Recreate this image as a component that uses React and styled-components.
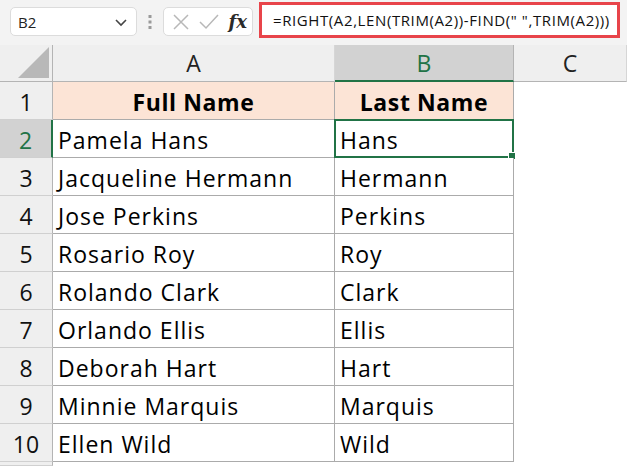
import React from "react";
import styled, { createGlobalStyle } from "styled-components";

const GlobalStyle = createGlobalStyle`
  html, body {
    margin: 0;
    padding: 0;
    background: #ffffff;
  }

  body {
    font-family: "Open Sans", "Noto Sans", sans-serif;
  }
`;

const Page = styled.div`
  width: 627px;
  height: 466px;
  overflow: hidden;
  background: #ffffff;
`;

const Toolbar = styled.div`
  height: 45px;
  box-sizing: border-box;
  padding: 2px 7px 0 10px;

  display: flex;
  align-items: flex-start;

  background: #f3f3f3;
`;

const NameBox = styled.div`
  width: 127px;
  height: 29px;
  margin-top: 5px;
  box-sizing: border-box;
  padding: 0 8px 0 7px;

  display: flex;
  align-items: center;
  justify-content: space-between;

  background: #ffffff;
  border: 1px solid #dcdcdc;
  border-radius: 5px;

  font-size: 15px;
  color: #222222;
`;

const Grip = styled.div`
  width: 26px;
  height: 29px;
  margin-top: 5px;

  display: flex;
  align-items: center;
  justify-content: center;
`;

const FxBox = styled.div`
  width: 90px;
  height: 29px;
  margin-top: 5px;
  box-sizing: border-box;
  padding: 0 5px 0 8px;

  display: flex;
  align-items: center;
  justify-content: space-between;

  background: #ffffff;
  border: 1px solid #dcdcdc;
  border-radius: 5px;
`;

const FxLabel = styled.span`
  font-family: "DejaVu Serif", "Liberation Serif", serif;
  font-style: italic;
  font-weight: 700;
  font-size: 18px;
  color: #2a2a2a;
`;

const FormulaBox = styled.div`
  width: 361px;
  height: 36px;
  margin-left: 6px;
  box-sizing: border-box;
  padding: 0 0 0 11px;

  display: flex;
  align-items: center;

  background: #ffffff;
  border: 3px solid #e8444a;

  font-size: 15px;
  letter-spacing: 0.6px;
  color: #111111;
  white-space: nowrap;
`;

const Grid = styled.div`
  display: grid;
  grid-template-columns: 53px 282px 179px 1fr;
  grid-template-rows: 37px repeat(10, 38px) 1fr;
  height: 421px;
`;

const Corner = styled.div`
  position: relative;
  background: #efefef;
  border-right: 1px solid #b4b4b4;
  border-bottom: 1px solid #b4b4b4;
`;

const CornerTriangle = styled.div`
  position: absolute;
  right: 3px;
  bottom: 3px;
  width: 0;
  height: 0;
  border-left: 31px solid transparent;
  border-bottom: 31px solid #b8b8b8;
`;

const ColHeader = styled.div`
  display: flex;
  align-items: center;
  justify-content: center;

  background: ${(p) => (p.$active ? "#d2d2d2" : "#efefef")};
  border-right: 1px solid ${(p) => (p.$active ? "#b4b4b4" : "#d6d6d6")};
  border-bottom: ${(p) => (p.$active ? "2px solid #217346" : "1px solid #b4b4b4")};
  box-sizing: border-box;

  font-size: 23px;
  color: ${(p) => (p.$active ? "#217346" : "#222222")};
`;

const RowHeader = styled.div`
  display: flex;
  align-items: center;
  justify-content: center;
  padding-top: 2px;

  background: ${(p) => (p.$active ? "#d2d2d2" : "#efefef")};
  border-right: ${(p) => (p.$active ? "2px solid #217346" : "1px solid #b4b4b4")};
  border-bottom: 1px solid #d0d0d0;
  box-sizing: border-box;

  font-size: 23px;
  color: ${(p) => (p.$active ? "#217346" : "#111111")};
`;

const Cell = styled.div`
  position: relative;
  display: flex;
  align-items: center;
  justify-content: ${(p) => (p.$head ? "center" : "flex-start")};
  padding-left: ${(p) => (p.$head ? "0" : "5px")};
  padding-top: 2px;
  box-sizing: border-box;

  background: ${(p) => (p.$head ? "#fce4d6" : "#ffffff")};
  border-right: 1px solid #ababab;
  border-bottom: 1px solid #ababab;

  font-size: 23px;
  letter-spacing: ${(p) => (p.$head ? "0.6px" : "1px")};
  font-weight: ${(p) => (p.$head ? 700 : 400)};
  color: #000000;
  white-space: nowrap;
`;

const Blank = styled.div`
  background: #ffffff;
`;

const Selection = styled.div`
  position: absolute;
  left: -1px;
  top: -1px;
  right: -1px;
  bottom: -1px;
  border: 2px solid #217346;
  pointer-events: none;
`;

const FillHandle = styled.div`
  position: absolute;
  right: -4px;
  bottom: -4px;
  width: 6px;
  height: 6px;
  background: #217346;
  border: 1px solid #ffffff;
`;

const rows = [
  ["Pamela Hans", "Hans"],
  ["Jacqueline Hermann", "Hermann"],
  ["Jose Perkins", "Perkins"],
  ["Rosario Roy", "Roy"],
  ["Rolando Clark", "Clark"],
  ["Orlando Ellis", "Ellis"],
  ["Deborah Hart", "Hart"],
  ["Minnie Marquis", "Marquis"],
  ["Ellen Wild", "Wild"],
];

const Chevron = () => (
  <svg width="14" height="10" viewBox="0 0 14 10">
    <path d="M2 3 L7 8 L12 3" fill="none" stroke="#444" strokeWidth="1.6" />
  </svg>
);

const Dots = () => (
  <svg width="4" height="14" viewBox="0 0 4 14">
    <rect x="0.5" y="0" width="3" height="3" fill="#9a9a9a" />
    <rect x="0.5" y="5.5" width="3" height="3" fill="#9a9a9a" />
    <rect x="0.5" y="11" width="3" height="3" fill="#9a9a9a" />
  </svg>
);

const Cross = () => (
  <svg width="18" height="18" viewBox="0 0 18 18">
    <path d="M2 2 L16 16 M16 2 L2 16" stroke="#b8b8b8" strokeWidth="1.5" />
  </svg>
);

const Check = () => (
  <svg width="22" height="18" viewBox="0 0 22 18">
    <path d="M2 9 L8 15 L20 2" fill="none" stroke="#b8b8b8" strokeWidth="1.5" />
  </svg>
);

const App = () => {
  return (
    <Page>
      <GlobalStyle />
      <Toolbar>
        <NameBox>
          <span>B2</span>
          <Chevron />
        </NameBox>
        <Grip>
          <Dots />
        </Grip>
        <FxBox>
          <Cross />
          <Check />
          <FxLabel>fx</FxLabel>
        </FxBox>
        <FormulaBox>=RIGHT(A2,LEN(TRIM(A2))-FIND(" ",TRIM(A2)))</FormulaBox>
      </Toolbar>

      <Grid>
        <Corner>
          <CornerTriangle />
        </Corner>
        <ColHeader>A</ColHeader>
        <ColHeader $active>B</ColHeader>
        <ColHeader>C</ColHeader>

        <RowHeader>1</RowHeader>
        <Cell $head>Full Name</Cell>
        <Cell $head>Last Name</Cell>
        <Blank />

        {rows.map(([full, last], i) => (
          <React.Fragment key={full}>
            <RowHeader $active={i === 0}>{i + 2}</RowHeader>
            <Cell>{full}</Cell>
            <Cell>
              {last}
              {i === 0 && (
                <Selection>
                  <FillHandle />
                </Selection>
              )}
            </Cell>
            <Blank />
          </React.Fragment>
        ))}

        <RowHeader />
        <Blank />
        <Blank />
        <Blank />
      </Grid>
    </Page>
  );
};

export default App;
